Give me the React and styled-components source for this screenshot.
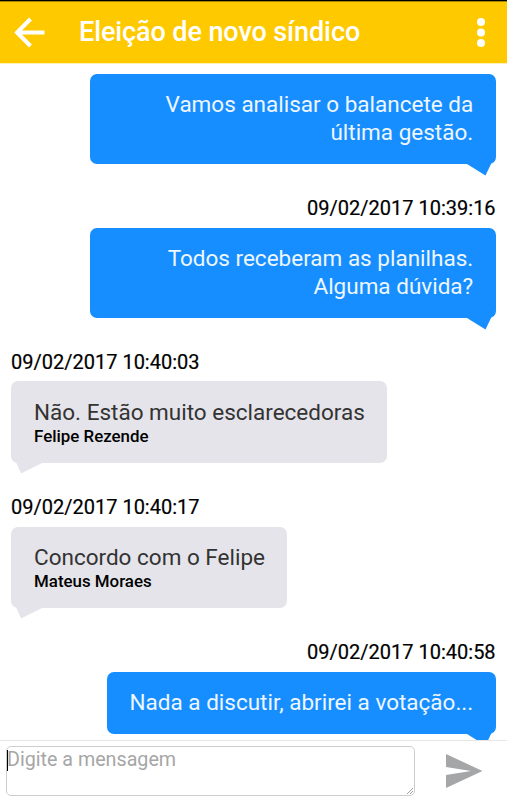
import React from 'react';
import styled, { createGlobalStyle } from 'styled-components';

const GlobalStyle = createGlobalStyle`
  * { box-sizing: border-box; }
  body { margin: 0; background: #fff; font-family: Roboto, "Liberation Sans", sans-serif; }
`;

const Screen = styled.div`
  display: flex;
  flex-direction: column;
  width: 507px;
  height: 800px;
  overflow: hidden;
  background: #fff;
`;

const Header = styled.header`
  flex: none;
  display: flex;
  align-items: center;
  height: 63px;
  padding: 0 17px 0 14px;
  border-top: 1px solid #000;
  background: #ffc900;
  box-shadow: inset 0 1px 0 #a88400, 0 1px 0 #fff0b8;
  color: #fff;
`;

const IconButton = styled.button`
  display: flex;
  padding: 0;
  border: 0;
  background: none;
  color: inherit;
`;

const Title = styled.h1`
  flex: 1;
  margin: 0 0 0 34px;
  font-size: 27px;
  font-weight: 500;
  line-height: 32px;
  letter-spacing: -0.1px;
  white-space: nowrap;
`;

const Thread = styled.main`
  flex: none;
  display: flex;
  flex-direction: column;
  height: 677px;
  padding: 11px 11.4px 0 11px;
  overflow: hidden;
`;

const Message = styled.article`
  flex: none;
  display: flex;
  flex-direction: column;
  align-items: ${(p) => (p.$own ? 'flex-end' : 'flex-start')};
  margin-bottom: 32px;
`;

const Timestamp = styled.time`
  height: 24px;
  margin-bottom: ${(p) => (p.$own ? 8 : 7.4)}px;
  font-size: 20px;
  line-height: 24px;
  color: #000;
  -webkit-text-stroke: 0.2px #000;
`;

const Bubble = styled.div`
  position: relative;
  width: ${(p) => p.$width}px;
  height: ${(p) => p.$height}px;
  padding: ${(p) => (p.$own ? '16px 22.4px 0' : '16.6px 22px 0 23px')};
  border-radius: 7px;
  background: ${(p) => (p.$own ? '#168eff' : '#e5e4ea')};
  color: ${(p) => (p.$own ? '#eef6ff' : '#333')};
  text-align: ${(p) => (p.$own ? 'right' : 'left')};
`;

const Tail = styled.svg`
  position: absolute;
  top: calc(100% - 1px);
  ${(p) => (p.$own ? 'right: 4px;' : 'left: 5px;')}
  fill: ${(p) => (p.$own ? '#168eff' : '#e5e4ea')};
`;

const Text = styled.p`
  margin: 0;
  font-size: 22.5px;
  line-height: 28px;
  white-space: pre;
`;

const Author = styled.div`
  font-size: 16.9px;
  font-weight: 500;
  line-height: 20px;
  color: #000;
`;

const Composer = styled.footer`
  flex: none;
  display: flex;
  align-items: flex-start;
  height: 60px;
  padding: 5px 0 0 6px;
  border-top: 1px solid #e6e6e6;
`;

const Field = styled.div`
  position: relative;
  width: 409px;
  height: 50px;
  border: 1px solid #cecece;
  border-radius: 5px;
  color: #a6a6a6;
  font-size: 19.7px;
  line-height: 26px;
`;

const Caret = styled.span`
  position: absolute;
  left: 0;
  top: 3px;
  width: 1px;
  height: 21px;
  background: #000;
`;

const Grip = styled.svg`
  position: absolute;
  right: 1px;
  bottom: 1px;
`;

const SendButton = styled(IconButton)`
  margin: 8px 0 0 31px;
`;

const messages = [
  { own: true, text: 'Vamos analisar o balancete da\núltima gestão.', width: 405.6, height: 90 },
  { own: true, time: '09/02/2017 10:39:16', text: 'Todos receberam as planilhas.\nAlguma dúvida?', width: 405.6, height: 90 },
  { time: '09/02/2017 10:40:03', text: 'Não. Estão muito esclarecedoras', author: 'Felipe Rezende', width: 376, height: 81.8 },
  { time: '09/02/2017 10:40:17', text: 'Concordo com o Felipe', author: 'Mateus Moraes', width: 276, height: 81.4 },
  { own: true, time: '09/02/2017 10:40:58', text: 'Nada a discutir, abrirei a votação...', width: 388.6, height: 61.6 },
];

function BubbleTail({ own }) {
  return (
    <Tail $own={own} width="27" height="13" viewBox="0 0 27 13">
      <path d={own ? 'M1 0L2 1L20.500 12.500L26 1V0Z' : 'M0 0L5 11.500L26 1V0Z'} />
    </Tail>
  );
}

export default function App() {
  return (
    <Screen>
      <GlobalStyle />
      <Header>
        <IconButton aria-label="Voltar">
          <svg width="31" height="32" viewBox="0 0 31 32" fill="none" stroke="currentColor" strokeWidth="4">
            <path d="M16.500 3L3 16.500L16.500 30M3 16.500H30.500" />
          </svg>
        </IconButton>
        <Title>Eleição de novo síndico</Title>
        <IconButton aria-label="Mais opções">
          <svg width="18" height="30" viewBox="0 0 18 30" fill="currentColor">
            <circle cx="9" cy="5" r="4" />
            <circle cx="9" cy="15.500" r="4" />
            <circle cx="9" cy="26" r="4" />
          </svg>
        </IconButton>
      </Header>
      <Thread>
        {messages.map((m) => (
          <Message key={m.text} $own={m.own}>
            {m.time && <Timestamp $own={m.own}>{m.time}</Timestamp>}
            <Bubble $own={m.own} $width={m.width} $height={m.height}>
              <Text>{m.text}</Text>
              {m.author && <Author>{m.author}</Author>}
              <BubbleTail own={m.own} />
            </Bubble>
          </Message>
        ))}
      </Thread>
      <Composer>
        <Field>
          Digite a mensagem
          <Caret />
          <Grip width="6" height="6" viewBox="0 0 6 6" stroke="#888" strokeWidth="0.8">
            <path d="M0 6L6 0M3 6L6 3" />
          </Grip>
        </Field>
        <SendButton aria-label="Enviar">
          <svg width="37" height="35" viewBox="0 0 37 35" fill="#a5a6a8">
            <path d="M0 0L36.500 17L0 34V21L25 17L0 13Z" />
          </svg>
        </SendButton>
      </Composer>
    </Screen>
  );
}
